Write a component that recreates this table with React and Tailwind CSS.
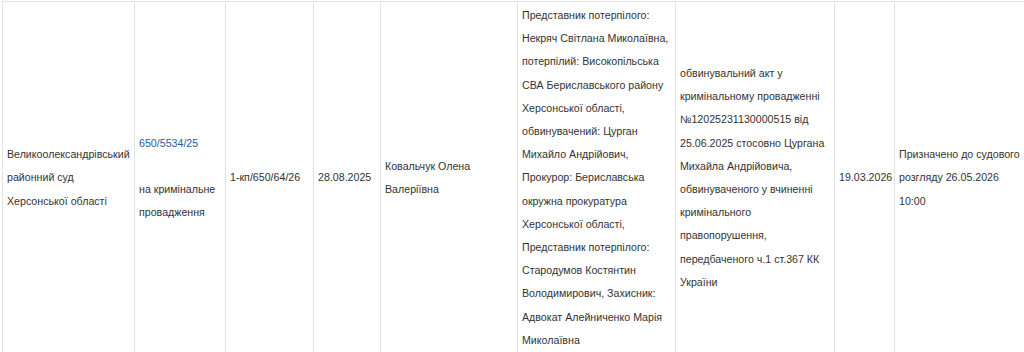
const cellCls = "border border-[#e3e3e3] px-1 py-[2px] align-middle";

export default function App() {
  return (
    <div className="h-[352px] w-[1024px] overflow-hidden bg-white font-['Liberation_Sans',Arial,sans-serif] text-[10.65px] leading-[23.2px] text-[#333]">
      <table className="ml-[2px] mt-[1px] w-[1022px] table-fixed border-collapse">
        <colgroup>
          <col className="w-[132px]" />
          <col className="w-[91px]" />
          <col className="w-[88px]" />
          <col className="w-[67px]" />
          <col className="w-[137px]" />
          <col className="w-[158px]" />
          <col className="w-[159px]" />
          <col className="w-[60px]" />
          <col className="w-[130px]" />
        </colgroup>
        <tbody>
          <tr>
            <td className={cellCls}>
              Великоолександрівський районний суд Херсонської області
            </td>
            <td className={cellCls}>
              <a href="#" className="text-[#2b5c97]">650/5534/25</a>
              <br />
              <br />
              на кримінальне провадження
            </td>
            <td className={cellCls}>1-кп/650/64/26</td>
            <td className={cellCls}>28.08.2025</td>
            <td className={cellCls}>Ковальчук Олена Валеріївна</td>
            <td className={cellCls}>
              Представник потерпілого: Некряч Світлана Миколаївна, потерпілий:
              Високопільська СВА Бериславського району Херсонської області,
              обвинувачений: Цурган Михайло Андрійович, Прокурор: Бериславська
              окружна прокуратура Херсонської області, Представник потерпілого:
              Стародумов Костянтин Володимирович, Захисник: Адвокат Алейниченко
              Марія Миколаївна
            </td>
            <td className={cellCls}>
              обвинувальний акт у кримінальному провадженні №12025231130000515
              від 25.06.2025 стосовно Цургана Михайла Андрійовича, обвинуваченого
              у вчиненні кримінального правопорушення, передбаченого ч.1 ст.367
              КК України
            </td>
            <td className={cellCls}>19.03.2026</td>
            <td className={cellCls}>
              Призначено до судового розгляду 26.05.2026
              <br />
              10:00
            </td>
          </tr>
        </tbody>
      </table>
    </div>
  );
}
